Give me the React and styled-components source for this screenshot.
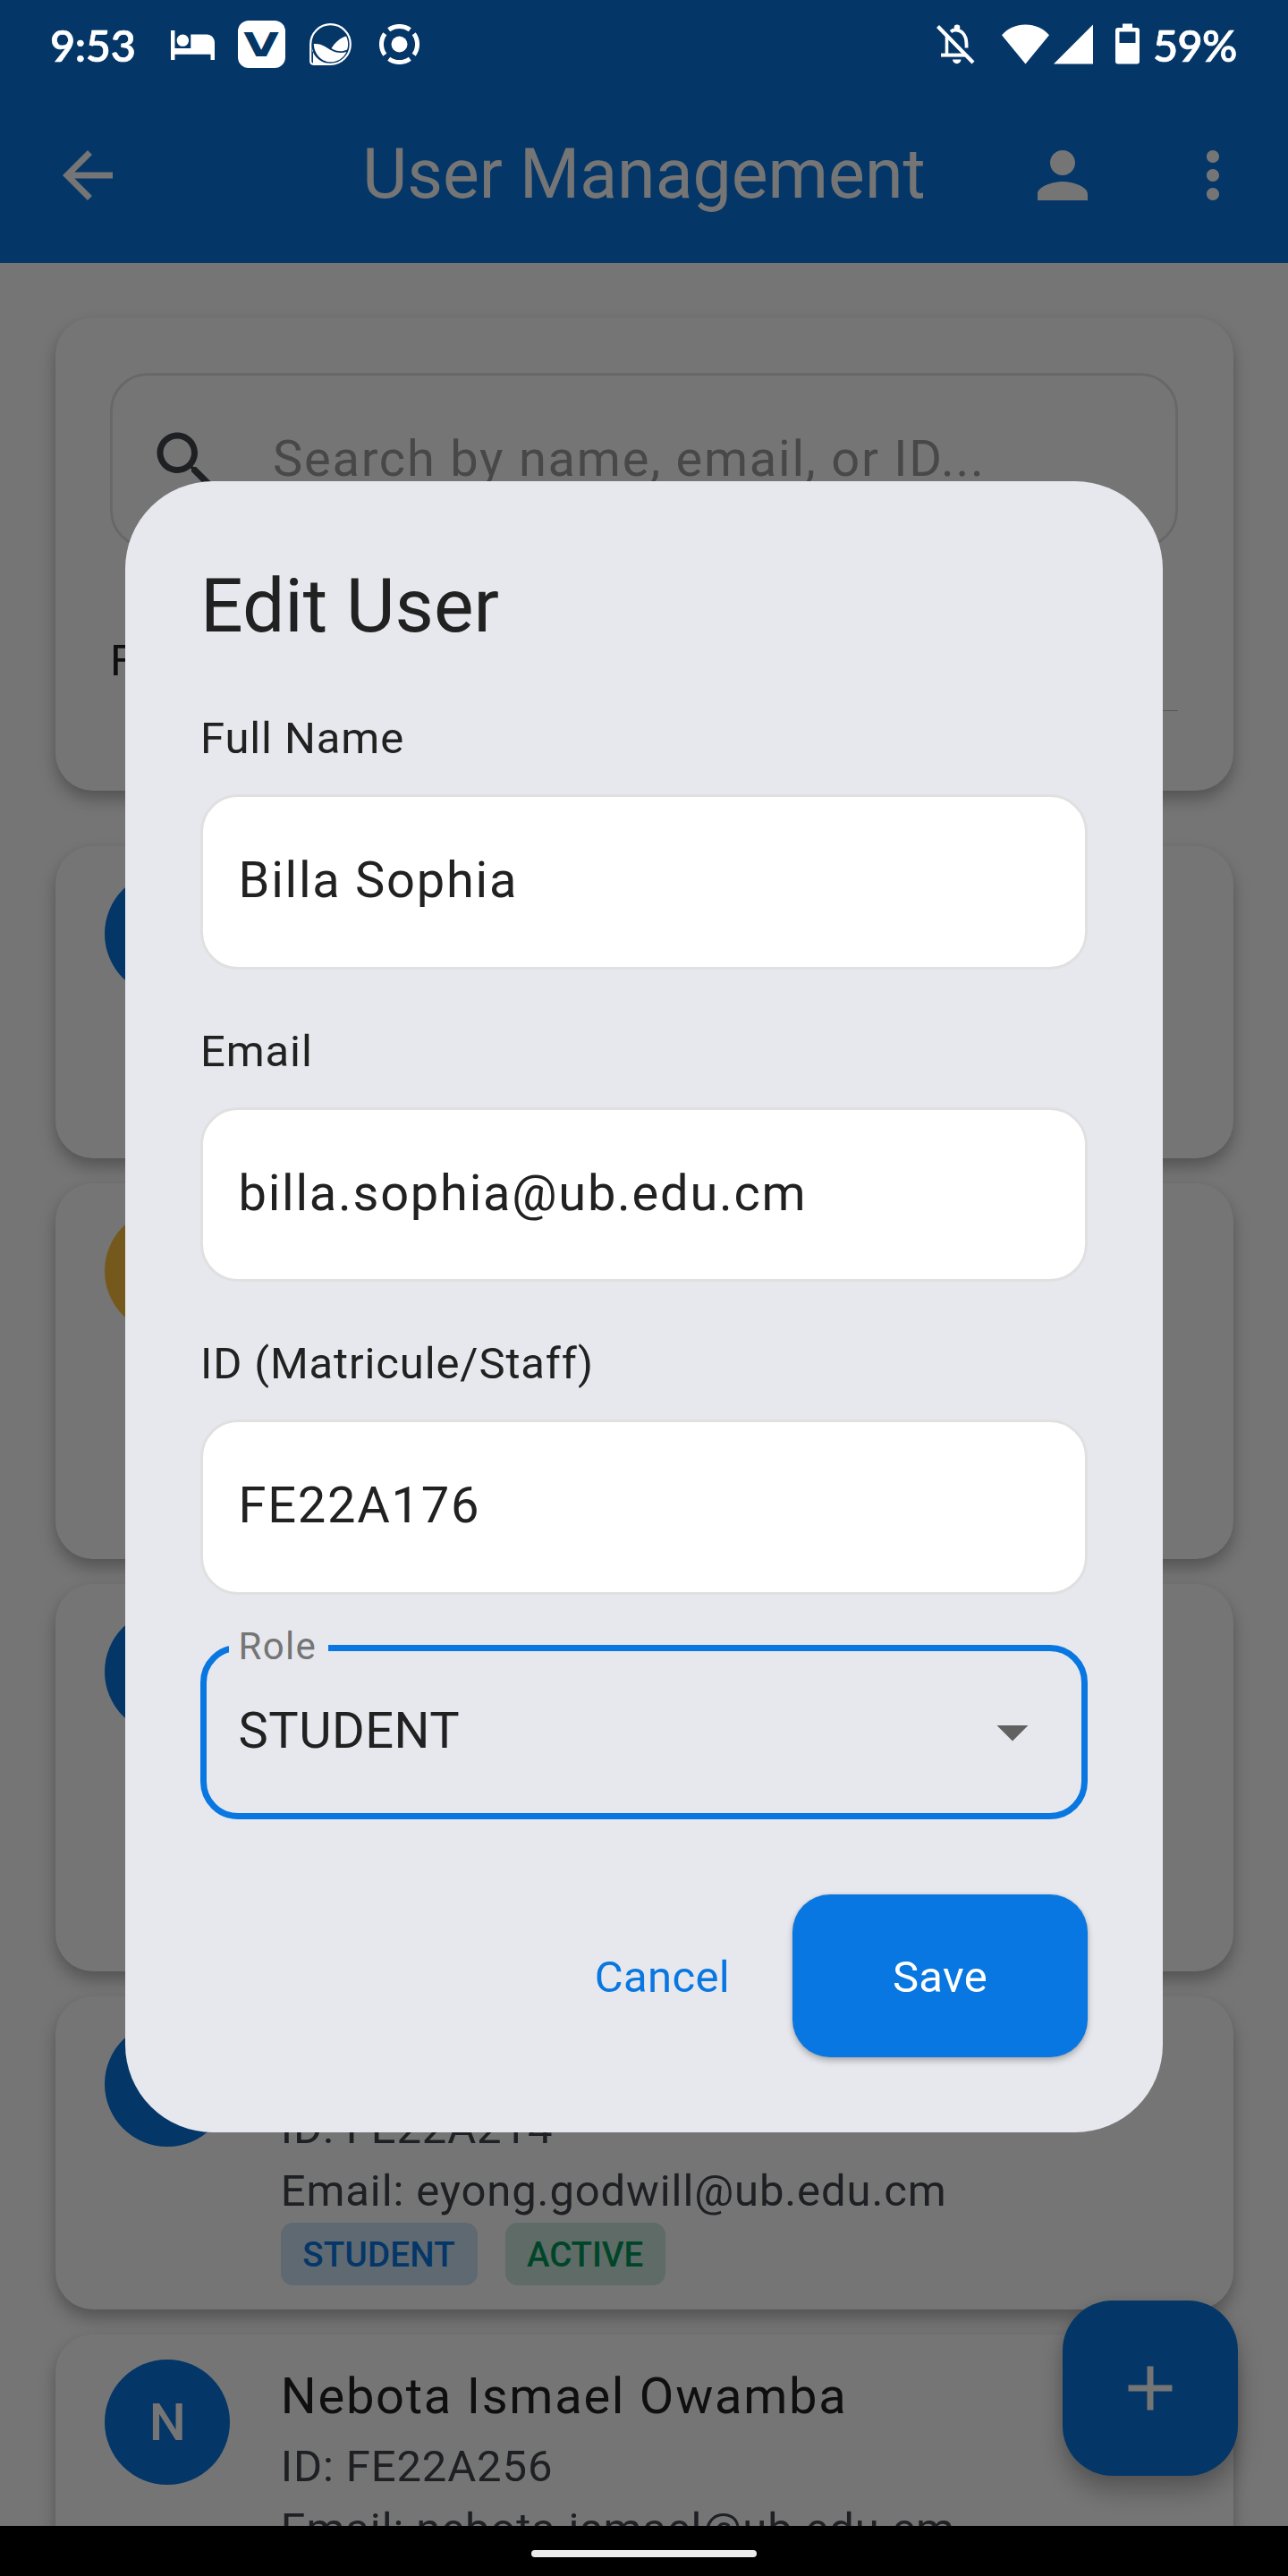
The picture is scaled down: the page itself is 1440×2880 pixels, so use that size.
import React from "react";
import styled, { createGlobalStyle } from "styled-components";

const BLUE = "#0977e1";
const AMBER = "#ffc33d";
const GREEN = "#00965a";
const INK = "#212121";
const VARIANT = "#43474e";

const GlobalStyle = createGlobalStyle`
  * { box-sizing: border-box; }
  html, body { margin: 0; padding: 0; }
  body { background: #000; font-family: Roboto, "Liberation Sans", sans-serif; }
`;

const Phone = styled.div`
  position: relative;
  display: flex;
  flex-direction: column;
  width: 1440px;
  height: 2880px;
  overflow: hidden;
  background: #000;
`;

const Header = styled.header`
  flex: none;
  height: 294px;
  background: ${BLUE};
`;

const StatusBar = styled.div`
  position: relative;
  z-index: 3;
  display: flex;
  align-items: center;
  height: 98px;
  padding: 0 58px 0 56px;
  color: #fff;
`;

const StatusText = styled.span`
  flex: none;
  width: ${(p) => p.$w}px;
  margin: 2px 0 0 ${(p) => p.$ml || 0}px;
  font: 600 48.5px/60px Lato, Roboto, sans-serif;
  letter-spacing: ${(p) => p.$ls}px;
  white-space: nowrap;
  -webkit-text-stroke: 0.7px #fff;
`;

const StatusIcon = styled.svg`
  display: block;
  flex: none;
  margin-left: ${(p) => p.$ml || 0}px;
  margin-top: ${(p) => p.$mt || 0}px;
`;

const AppBadge = styled.span`
  display: flex;
  align-items: center;
  justify-content: center;
  flex: none;
  width: 53px;
  height: 53px;
  margin-left: 26px;
  border-radius: 12px;
  background: #fff;
  color: #053766;
  font: 700 36.5px/53px "DejaVu Sans", sans-serif;
`;

const BadgeLetter = styled.span`
  transform: translateY(1px) scaleX(1.4);
`;

const Spacer = styled.span`
  flex: 1;
`;

const Toolbar = styled.div`
  display: grid;
  grid-template-columns: 336px 1fr 336px;
  align-items: center;
  height: 196px;
  padding: 0 42px 0 56px;
  color: #fff;
`;

const ToolbarTitle = styled.h1`
  margin: 0;
  padding: 0 14px 2px 0;
  font-size: 77px;
  font-weight: 400;
  line-height: 98px;
  text-align: center;
  white-space: nowrap;
`;

const ToolbarActions = styled.div`
  display: flex;
  justify-content: flex-end;
  gap: 84px;
`;

const Icon = styled.svg`
  display: block;
  flex: none;
  width: 84px;
  height: 84px;
  fill: currentColor;
`;

const Body = styled.main`
  display: flex;
  flex-direction: column;
  flex: 1;
  min-height: 0;
  overflow: hidden;
  padding: 61.25px 61.5px 0;
  background: #fefefe;
`;

const Card = styled.section`
  flex: none;
  border-radius: 42px;
  background: #fff;
  box-shadow: 0 10px 18px rgba(0, 0, 0, 0.27), 0 0 8px rgba(0, 0, 0, 0.03);
`;

const FilterCard = styled(Card)`
  height: 529px;
  padding: 61.5px;
`;

const SearchBox = styled.div`
  display: flex;
  align-items: center;
  height: 196px;
  padding-left: 38.5px;
  border: 3.5px solid #e2e2e2;
  border-radius: 42px;
  color: ${VARIANT};
`;

const Placeholder = styled.span`
  margin-left: 56.5px;
  padding-bottom: 3px;
  color: #9e9e9e;
  font-size: 56px;
  line-height: 84px;
  letter-spacing: 1.75px;
`;

const FilterRow = styled.div`
  display: flex;
  align-items: center;
  height: 168px;
  margin-top: 42px;
  color: ${INK};
  font-size: 49px;
  letter-spacing: 0.875px;
`;

const FilterSelect = styled.div`
  flex: 1;
  align-self: stretch;
  margin: 0 0 28px 56px;
  border-bottom: 1.5px solid #bdbdbd;
`;

const UserList = styled.div`
  display: flex;
  flex-direction: column;
  gap: 28px;
  margin-top: 61.5px;
`;

const UserCard = styled(Card)`
  display: flex;
  gap: 56.5px;
  height: ${(p) => p.$h}px;
  padding: 28px 55.75px;
`;

const Avatar = styled.div`
  display: flex;
  align-items: center;
  justify-content: center;
  flex: none;
  width: 140px;
  height: 140px;
  border-radius: 50%;
  background: ${(p) => p.$c};
  color: #fff;
  font-size: 58px;
  font-weight: 500;
`;

const UserInfo = styled.div`
  flex: 1;
  white-space: nowrap;
`;

const UserName = styled.div`
  height: 86.5px;
  margin-top: -1.5px;
  color: ${INK};
  font-size: 56px;
  line-height: 84px;
  letter-spacing: 1.75px;
`;

const UserLine = styled.div`
  color: ${VARIANT};
  font-size: 49px;
  line-height: 70px;
  letter-spacing: 0.875px;
`;

const ChipRow = styled.div`
  display: flex;
  gap: 31px;
`;

const Chip = styled.span`
  height: 70px;
  padding: 0 24.5px;
  border-radius: 14px;
  background: ${(p) => p.$bg};
  color: ${(p) => p.$c};
  font-size: 38.5px;
  font-weight: 500;
  line-height: 71px;
  letter-spacing: ${(p) => p.$ls}px;
`;

const Fab = styled.button`
  position: absolute;
  right: 56px;
  bottom: 112px;
  display: flex;
  align-items: center;
  justify-content: center;
  width: 196px;
  height: 196px;
  padding: 0;
  border: 0;
  border-radius: 56px;
  background: ${BLUE};
  color: #fff;
  box-shadow: 0 18px 28px rgba(0, 0, 0, 0.26), 0 0 14px rgba(0, 0, 0, 0.08);
`;

const NavBar = styled.footer`
  position: relative;
  z-index: 3;
  display: flex;
  align-items: center;
  justify-content: center;
  flex: none;
  height: 56px;
  padding-top: 6px;
  background: #000;
`;

const NavHandle = styled.span`
  width: 252px;
  height: 8px;
  border-radius: 4px;
  background: #ececec;
`;

const Scrim = styled.div`
  position: absolute;
  inset: 0;
  z-index: 2;
  display: flex;
  align-items: center;
  justify-content: center;
  padding: 98px 0 56px;
  background: rgba(0, 0, 0, 0.54);
`;

const Dialog = styled.form`
  display: flex;
  flex-direction: column;
  width: 1160px;
  height: 1846px;
  padding: 84px;
  border-radius: 98px;
  background: #e7e8ed;
  color: ${INK};
`;

const DialogTitle = styled.h2`
  margin: 0 0 56px;
  font-size: 84px;
  font-weight: 400;
  line-height: 112px;
`;

const Field = styled.label`
  display: block;
  height: 349.5px;
`;

const FieldLabel = styled.span`
  display: block;
  height: 70px;
  font-size: 49px;
  line-height: 72px;
  letter-spacing: 0.875px;
`;

const FieldValue = styled.span`
  display: block;
  height: 195.5px;
  margin-top: 28px;
  padding: 0 39.5px;
  border: 3.5px solid #e0e0e0;
  border-radius: 42px;
  background: #fff;
  font-size: 56px;
  line-height: 187px;
  letter-spacing: 1.75px;
`;

const RoleSelect = styled.div`
  position: relative;
  display: flex;
  align-items: center;
  justify-content: space-between;
  flex: none;
  height: 195.5px;
  padding: 0 35px;
  border: 7px solid ${BLUE};
  border-radius: 42px;
`;

const RoleLabel = styled.span`
  position: absolute;
  left: 25px;
  top: -33px;
  width: 111px;
  height: 56px;
  padding-left: 10.5px;
  background: #e7e8ed;
  color: #757575;
  font-size: 42px;
  line-height: 56px;
  letter-spacing: 1.3px;
`;

const RoleValue = styled.span`
  padding: 0 0 3px 0.5px;
  font-size: 56px;
  line-height: 84px;
  letter-spacing: 0.5px;
`;

const CaretIcon = styled(Icon)`
  color: #616161;
`;

const Actions = styled.div`
  display: flex;
  align-items: center;
  justify-content: flex-end;
  gap: 28px;
  margin-top: 84px;
  height: 182px;
`;

const Button = styled.button`
  height: ${(p) => (p.$filled ? 182 : 168)}px;
  width: ${(p) => (p.$filled ? "330px" : "auto")};
  padding: 4px 42px 0;
  border: 0;
  border-radius: 42px;
  background: ${(p) => (p.$filled ? BLUE : "transparent")};
  color: ${(p) => (p.$filled ? "#fff" : BLUE)};
  box-shadow: ${(p) => (p.$filled ? "0 4px 7px rgba(0,0,0,0.25), 0 0 3px rgba(0,0,0,0.12)" : "none")};
  font: 400 49px/70px Roboto, sans-serif;
  letter-spacing: 0.35px;
`;

const users = [
  { initial: "B", color: BLUE, height: 349.5 },
  { initial: "D", color: AMBER, height: 419.5 },
  { initial: "E", color: BLUE, height: 433.5 },
  {
    initial: "E",
    color: BLUE,
    height: 350,
    name: "Eyong Godwill",
    id: "FE22A214",
    email: "eyong.godwill@ub.edu.cm",
  },
  {
    initial: "N",
    color: BLUE,
    height: 350,
    name: "Nebota Ismael Owamba",
    id: "FE22A256",
    email: "nebota.ismael@ub.edu.cm",
  },
];

const fields = [
  { label: "Full Name", value: "Billa Sophia" },
  { label: "Email", value: "billa.sophia@ub.edu.cm" },
  { label: "ID (Matricule/Staff)", value: "FE22A176" },
];

function StatusIcons() {
  return (
    <StatusBar>
      <StatusText $w={135} $ls={-0.3}>9:53</StatusText>
      <StatusIcon $mt={3} width="49" height="33.4" viewBox="1 5 22 15" fill="#fff">
        <path d="M7 13c1.66 0 3-1.34 3-3S8.66 7 7 7s-3 1.34-3 3 1.34 3 3 3zm12-6h-8v7H3V5H1v15h2v-3h18v3h2v-9c0-2.21-1.79-4-4-4z" />
      </StatusIcon>
      <AppBadge>
        <BadgeLetter>V</BadgeLetter>
      </AppBadge>
      <StatusIcon $ml={27} width="47" height="47" viewBox="0 0 47 47" fill="none">
        <path d="M23.5 1.2A22.3 22.3 0 1 1 23.5 45.8H4.5Q1.2 45.8 1.2 42.5V23.5A22.3 22.3 0 0 1 23.5 1.2Z" stroke="#fff" strokeWidth="2.2" />
        <path d="M4 31V45H24C14 45 5 39 2 27Z" fill="#fff" />
        <circle cx="23.5" cy="23.5" r="20.6" fill="#053766" />
        <path d="M4.8 23C14 22 19 27.5 25 30.5C31 33.5 36 33.5 41.5 32C37.5 40 30.5 43.3 23.5 43.3C13 43.3 5 34 4.8 23Z" fill="#fff" />
        <path d="M24.5 28C29 21 34 16.5 41 14.5C43.6 20 43.6 25.5 42 29.5C36 32.5 30 31.5 24.5 28Z" fill="#fff" />
      </StatusIcon>
      <StatusIcon $ml={31} width="45" height="45" viewBox="-22.5 -22.5 45 45" fill="none" stroke="#fff" strokeWidth="5">
        <circle r="9" fill="#fff" stroke="none" />
        <path d="M-11.8 -16.2A20 20 0 0 1 11.8 -16.2M16.2 -11.8A20 20 0 0 1 16.2 11.8M11.8 16.2A20 20 0 0 1 -11.8 16.2M-16.2 11.8A20 20 0 0 1 -16.2 -11.8" />
      </StatusIcon>
      <Spacer />
      <StatusIcon width="44" height="45" viewBox="0 0 44 45" fill="none">
        <path d="M12.5 14V33.5" stroke="#fff" strokeWidth="3.6" />
        <path d="M6 34.6H34" stroke="#fff" strokeWidth="4" />
        <path d="M17 8.5C20 5.8 26 5.6 30 9.5C33.5 13 34.6 16.5 34.6 26.5" stroke="#fff" strokeWidth="3.8" />
        <circle cx="24" cy="3.8" r="3.3" fill="#fff" />
        <path d="M19 39.5H28.5A4.75 4.75 0 0 1 19 39.5Z" fill="#fff" />
        <path d="M2.5 2.5L42 43" stroke="#fff" strokeWidth="4.2" />
      </StatusIcon>
      <StatusIcon $ml={30} width="53" height="45" viewBox="0 0 53 45" fill="#fff">
        <path d="M0 12.2C7 4.5 16 0.5 26.5 0.5S46 4.5 53 12.2L26.5 44.5Z" />
      </StatusIcon>
      <StatusIcon $ml={5} width="44" height="45" viewBox="0 0 44 45" fill="#fff">
        <path d="M44 0.5V44.5H0Z" />
      </StatusIcon>
      <StatusIcon $ml={25} width="27" height="46" viewBox="0 0 27 46" fill="#fff" fillRule="evenodd">
        <path d="M8 0.5H19V5H24Q27 5 27 8V42.5Q27 45.5 24 45.5H3Q0 45.5 0 42.5V8Q0 5 3 5H8ZM4.5 9.5V22H22.5V9.5Z" />
      </StatusIcon>
      <StatusText $w={93} $ml={15} $ls={-0.6}>59%</StatusText>
    </StatusBar>
  );
}

export default function App() {
  return (
    <>
      <GlobalStyle />
      <Phone>
        <Header>
          <StatusIcons />
          <Toolbar>
            <Icon viewBox="0 0 24 24">
              <path d="M20 11H7.83l5.59-5.59L12 4l-8 8 8 8 1.41-1.41L7.83 13H20v-2z" />
            </Icon>
            <ToolbarTitle>User Management</ToolbarTitle>
            <ToolbarActions>
              <Icon viewBox="0 0 24 24">
                <path d="M12 12c2.21 0 4-1.79 4-4s-1.79-4-4-4-4 1.79-4 4 1.79 4 4 4zm0 2c-2.67 0-8 1.34-8 4v2h16v-2c0-2.66-5.33-4-8-4z" />
              </Icon>
              <Icon viewBox="0 0 24 24">
                <path d="M12 8c1.1 0 2-.9 2-2s-.9-2-2-2-2 .9-2 2 .9 2 2 2zm0 2c-1.1 0-2 .9-2 2s.9 2 2 2 2-.9 2-2-.9-2-2-2zm0 6c-1.1 0-2 .9-2 2s.9 2 2 2 2-.9 2-2-.9-2-2-2z" />
              </Icon>
            </ToolbarActions>
          </Toolbar>
        </Header>

        <Body>
          <FilterCard>
            <SearchBox>
              <Icon viewBox="0 0 24 24">
                <path d="M15.5 14h-.79l-.28-.27C15.41 12.59 16 11.11 16 9.5 16 5.91 13.09 3 9.5 3S3 5.91 3 9.5 5.91 16 9.5 16c1.61 0 3.09-.59 4.23-1.57l.27.28v.79l5 4.99L20.49 19l-4.99-5zm-6 0C7.01 14 5 11.99 5 9.5S7.01 5 9.5 5 14 7.01 14 9.5 11.99 14 9.5 14z" />
              </Icon>
              <Placeholder>Search by name, email, or ID...</Placeholder>
            </SearchBox>
            <FilterRow>
              Filter
              <FilterSelect />
            </FilterRow>
          </FilterCard>

          <UserList>
            {users.map((u, i) => (
              <UserCard key={i} $h={u.height}>
                <Avatar $c={u.color}>{u.initial}</Avatar>
                {u.name && (
                  <UserInfo>
                    <UserName>{u.name}</UserName>
                    <UserLine>ID: {u.id}</UserLine>
                    <UserLine>Email: {u.email}</UserLine>
                    <ChipRow>
                      <Chip $bg="rgba(9,119,225,0.2)" $c={BLUE} $ls={0.25}>STUDENT</Chip>
                      <Chip $bg="rgba(0,150,90,0.2)" $c={GREEN} $ls={-0.15}>ACTIVE</Chip>
                    </ChipRow>
                  </UserInfo>
                )}
              </UserCard>
            ))}
          </UserList>

          <Fab type="button" aria-label="Add user">
            <Icon viewBox="0 0 24 24">
              <path d="M19 13h-6v6h-2v-6H5v-2h6V5h2v6h6v2z" />
            </Icon>
          </Fab>
        </Body>

        <NavBar>
          <NavHandle />
        </NavBar>

        <Scrim>
          <Dialog>
            <DialogTitle>Edit User</DialogTitle>
            {fields.map((f) => (
              <Field key={f.label}>
                <FieldLabel>{f.label}</FieldLabel>
                <FieldValue>{f.value}</FieldValue>
              </Field>
            ))}
            <RoleSelect>
              <RoleLabel>Role</RoleLabel>
              <RoleValue>STUDENT</RoleValue>
              <CaretIcon viewBox="0 0 24 24">
                <path d="M7 10l5 5 5-5z" />
              </CaretIcon>
            </RoleSelect>
            <Actions>
              <Button type="button">Cancel</Button>
              <Button type="button" $filled>Save</Button>
            </Actions>
          </Dialog>
        </Scrim>
      </Phone>
    </>
  );
}
